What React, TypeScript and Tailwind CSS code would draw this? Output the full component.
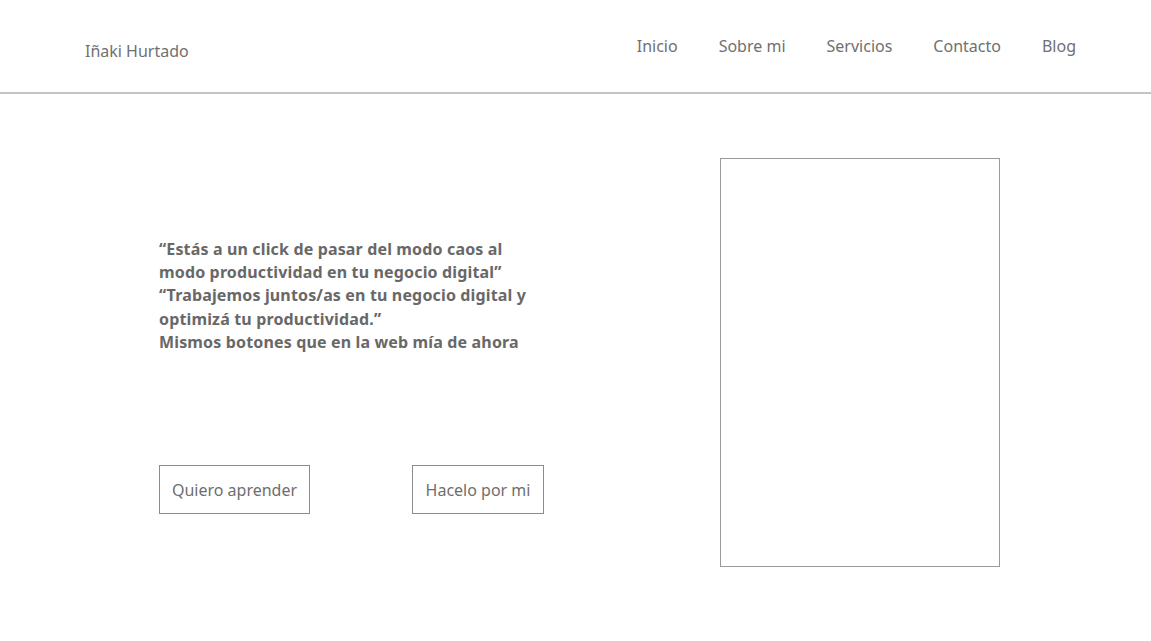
export default function App() {
  const font = { fontFamily: '"Noto Sans", "Open Sans", sans-serif' };
  return (
    <div className="w-[1151px] h-[641px] bg-white overflow-hidden" style={font}>
      <header className="h-[94px] border-b-2 border-[#c4c4c4] flex items-start justify-between pl-[85px] pr-[75px]">
        <div className="mt-[39px] text-[16px] leading-[24px] text-[#707070]">Iñaki Hurtado</div>
        <nav className="mt-[34px] flex gap-[41px] text-[16px] leading-[24px] text-[#707070]">
          <span>Inicio</span>
          <span>Sobre mi</span>
          <span>Servicios</span>
          <span>Contacto</span>
          <span>Blog</span>
        </nav>
      </header>
      <main className="flex pl-[159px]">
        <div className="w-[400px] pt-[144px]">
          <p className="text-[16px] leading-[23.2px] font-bold tracking-[0.15px] text-[#686868]">
            “Estás a un click de pasar del modo caos al<br />
            modo productividad en tu negocio digital”<br />
            “Trabajemos juntos/as en tu negocio digital y<br />
            optimizá tu productividad.”<br />
            Mismos botones que en la web mía de ahora
          </p>
          <div className="mt-[111px] flex">
            <div className="w-[151px] h-[49px] border border-[#8c8c8c] flex items-center justify-center text-[16px] text-[#6e6e6e]">Quiero aprender</div>
            <div className="ml-[102px] w-[132px] h-[49px] border border-[#8c8c8c] flex items-center justify-center text-[16px] text-[#6e6e6e]">Hacelo por mi</div>
          </div>
        </div>
        <div className="ml-[161px] mt-[64px] w-[280px] h-[409px] border border-[#9a9a9a]"></div>
      </main>
    </div>
  );
}
